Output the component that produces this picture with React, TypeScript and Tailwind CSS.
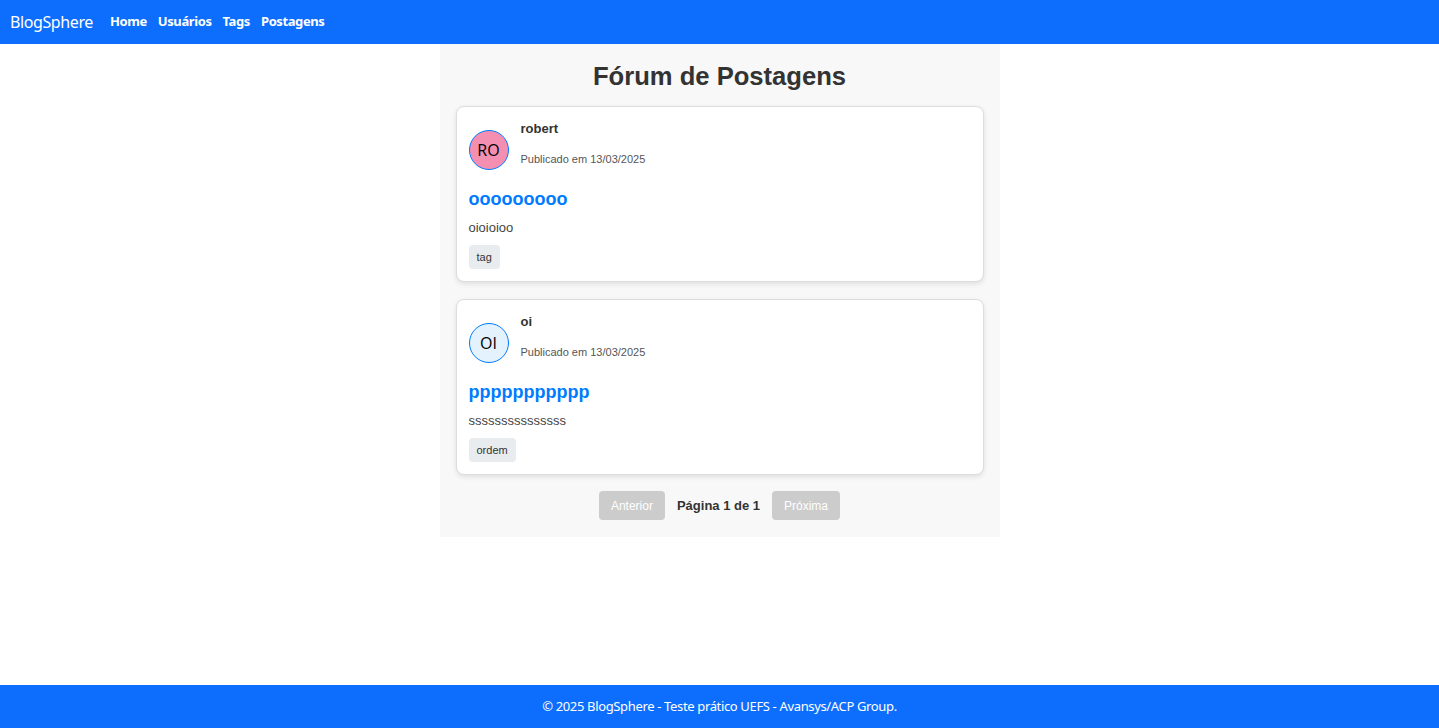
import React from "react";

const posts = [
  { user: "robert", initials: "RO", avatarBg: "bg-[#f48fb1]", date: "13/03/2025", title: "ooooooooo", content: "oioioioo", tags: ["tag"] },
  { user: "oi", initials: "OI", avatarBg: "bg-[#e3f2fd]", date: "13/03/2025", title: "ppppppppppp", content: "sssssssssssssss", tags: ["ordem"] },
];

export default function App() {
  return (
    <div className="min-h-[728px] h-[728px] flex flex-col bg-white">
      <nav className="h-[44px] bg-[#0d6efd] flex items-center px-[10px] shrink-0 font-['Noto_Sans',sans-serif] text-white">
        <span className="text-[16px] leading-none mr-[17px] tracking-[-0.4px]">BlogSphere</span>
        <div className="flex items-center gap-[11px] text-[13px] font-bold tracking-[-0.4px]">
          <span>Home</span>
          <span>Usuários</span>
          <span>Tags</span>
          <span>Postagens</span>
        </div>
      </nav>
      <main className="flex-1 flex justify-center">
        <div className="w-[560px] self-start bg-[#f8f8f8] px-4 pt-4 pb-[17px] font-['Liberation_Sans',Arial,sans-serif]">
          <h1 className="text-[25.6px] leading-[30px] font-bold text-[#333] text-center mt-[1px] mb-[15px]">Fórum de Postagens</h1>
          <div className="flex flex-col gap-[17px]">
            {posts.map((p) => (
              <div key={p.user} className="bg-white border border-[#ddd] rounded-[8px] shadow-[0_2px_5px_rgba(0,0,0,0.1)] px-[12px] pb-[12px]">
                <div className="flex items-start gap-[12px]">
                  <div className={`mt-[23px] w-[40px] h-[40px] rounded-full border border-[#007bff] ${p.avatarBg} flex items-center justify-center text-[16px] text-black font-['Open_Sans',sans-serif]`}>
                    {p.initials}
                  </div>
                  <div className="pt-[14px]">
                    <div className="text-[13px] leading-[16px] font-bold text-[#333]">{p.user}</div>
                    <div className="text-[11px] leading-[13px] text-[#555] mt-[16px] mb-[14px]">Publicado em {p.date}</div>
                  </div>
                </div>
                <h2 className="text-[18px] leading-[21px] font-bold text-[#007bff] mt-[9px]">{p.title}</h2>
                <p className="text-[13px] leading-[15px] text-[#444] mt-[10px]">{p.content}</p>
                <div className="flex gap-2 mt-[10px]">
                  {p.tags.map((t) => (
                    <span key={t} className="bg-[#e9ecef] text-[#333] text-[11px] leading-[24px] px-[8px] rounded-[4px]">{t}</span>
                  ))}
                </div>
              </div>
            ))}
          </div>
          <div className="flex items-center justify-center gap-[12px] mt-[16px]">
            <button className="h-[29px] w-[66px] bg-[#ccc] text-white text-[12px] rounded-[4px]">Anterior</button>
            <span className="text-[13px] font-bold text-[#333]">Página 1 de 1</span>
            <button className="h-[29px] w-[68px] bg-[#ccc] text-white text-[12px] rounded-[4px]">Próxima</button>
          </div>
        </div>
      </main>
      <footer className="h-[43px] bg-[#0d6efd] shrink-0 flex items-center justify-center text-white text-[13px] font-['Noto_Sans',sans-serif] tracking-[-0.35px]">
        © 2025 BlogSphere - Teste prático UEFS - Avansys/ACP Group.
      </footer>
    </div>
  );
}
